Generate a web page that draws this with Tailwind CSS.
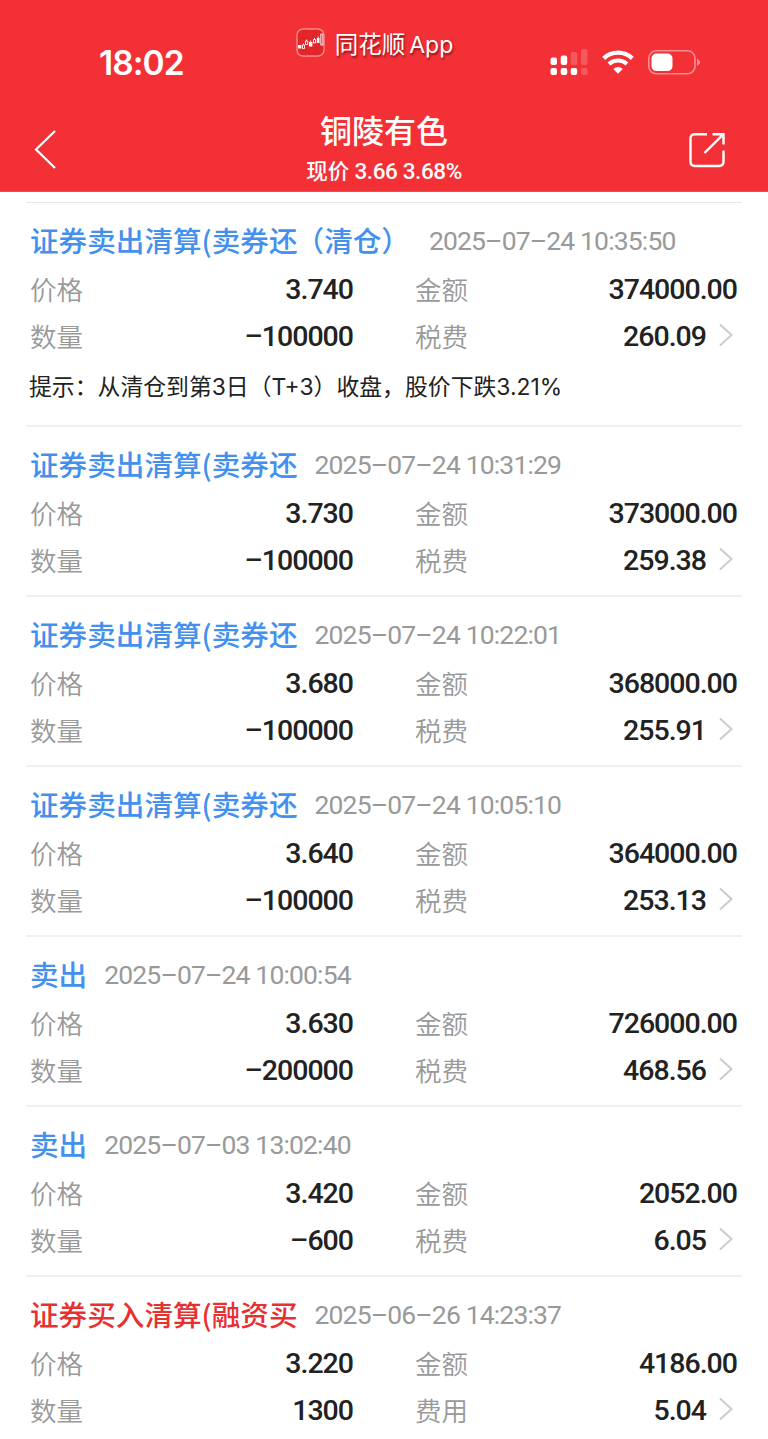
<!DOCTYPE html>
<html lang="zh-CN">
<head>
    <meta charset="UTF-8">
    <meta name="viewport" content="width=device-width, initial-scale=1.0">
    <title>铜陵有色</title>
    <script src="https://cdn.jsdelivr.net/npm/@tailwindcss/browser@4"></script>
</head>
<body class="bg-white font-['Roboto','Noto_Sans_CJK_SC',sans-serif] w-[768px] h-[1439px] overflow-hidden">
    <header class="bg-[#f23036] text-white h-[192px] border-b border-[#d9555a]">
        <!-- Status bar -->
        <div class="grid grid-cols-3 h-[96px]">
            <div class="pl-[99px] pt-[43px] text-[33.500px] leading-[40px] font-semibold font-['Inter',sans-serif] tracking-[-0.900px]">18:02</div>
            <div class="flex items-start justify-center gap-[9px] pt-[28px] pr-[19px] whitespace-nowrap">
                <svg class="w-[30px] h-[30px] shrink-0" viewBox="0 0 30 30" fill="none">
                    <rect x="1" y="1" width="27" height="27" rx="6" fill="#e3262a" stroke="#f98b8d" stroke-width="1.4"/>
                    <path d="M1 10H28M1 20H28M10 1V28M20 1V28" stroke="#d62226" stroke-width=".5"/>
                    <path d="M2 17h3.400v3.500H2zM13 14h3.400v4.500h-3.400zM20.800 10h2.700v5h-2.700z" fill="#fff"/>
                    <path d="M6.500 17h2v3.500h-2zM9.500 13h2.200v3.500h-2.200zM17.500 11.500h2v3.500h-2zM24.800 6h2v11h-2zM10.600 11.500v1.500M7.500 15.500v1.500M14.700 12.500v1.500M18.500 10v1.500M22.200 8.500v1.500" stroke="#fff" stroke-width=".9"/>
                </svg>
                <div class="text-[23.500px] leading-[31px] [text-shadow:1px_2px_2px_rgba(90,0,0,0.6)] font-['Noto_Sans_CJK_SC',sans-serif]">同花顺<span class="font-['Inter'] text-[23px] ml-[4px]">App</span></div>
            </div>
            <div class="flex items-start justify-end pt-[48px] pr-[67px]">
                <svg class="w-[38px] h-[28px]" viewBox="0 0 38 28" fill="#fff">
                    <rect x="0.500" y="9.500" width="6.500" height="7.500" rx="2"/>
                    <rect x="10.700" y="7.500" width="6.500" height="9.500" rx="2"/>
                    <rect x="20.700" y="4" width="6.500" height="13" rx="2" opacity=".2"/>
                    <rect x="31" y="1" width="6.500" height="16" rx="2" opacity=".2"/>
                    <rect x="0.500" y="20" width="6.500" height="7" rx="2"/>
                    <rect x="10.700" y="20" width="6.500" height="7" rx="2"/>
                    <rect x="20.700" y="20" width="6.500" height="7" rx="2"/>
                    <rect x="31" y="20" width="6.500" height="7" rx="2" opacity=".2"/>
                </svg>
                <svg class="w-[32px] h-[24px] mt-[2px] ml-[14px]" viewBox="0 0 32 24" fill="none" stroke="#fff">
                    <path d="M1.700 8.300C9.800 .7 22.200 .7 30.300 8.300" stroke-width="4.400"/>
                    <path d="M7 14C12 9.200 20 9.200 25 14" stroke-width="4"/>
                    <path d="M16 23.800L11.300 19Q16 15 20.700 19Z" fill="#fff" stroke="none"/>
                </svg>
                <svg class="w-[54px] h-[26px] mt-[1px] ml-[13px]" viewBox="0 0 54 26" fill="none">
                    <rect x="1.800" y="1.800" width="46.200" height="23" rx="7.500" stroke="#f98f92" stroke-width="1.600"/>
                    <rect x="4.500" y="4.500" width="21" height="17.600" rx="5" fill="#fff"/>
                    <path d="M50 9.500Q53 11 53 13.300T50 17Z" fill="#f98f92"/>
                </svg>
            </div>
        </div>
        <!-- Title bar -->
        <div class="flex justify-between h-[95px]">
            <svg class="w-[24px] h-[40px] ml-[34px] mt-[33px]" viewBox="0 0 24 40" fill="none" stroke="#fff" stroke-width="2.200">
                <path d="M21 2L2 20.500L21 39"/>
            </svg>
            <div class="text-center font-medium pt-[13px] pl-[22px]">
                <h1 class="text-[32px] leading-[46px] font-medium">铜陵有色</h1>
                <p class="text-[21.500px] leading-[32px]">现价 <span class="text-[22.500px] tracking-[-0.400px]">3.66 3.68%</span></p>
            </div>
            <svg class="w-[38px] h-[38px] mr-[42px] mt-[35px]" viewBox="0 0 38 38" fill="none" stroke="#fff" stroke-width="2.400">
                <path d="M19 3.200H7Q2.500 3.200 2.500 7.700V30.500Q2.500 35 7 35H31Q35.500 35 35.500 30.500V19.500"/>
                <path d="M24.500 3.200H35.500V13.500M35 3.700L16.500 22"/>
            </svg>
        </div>
    </header>

    <main id="records" class="pt-[10px] px-[26px]"></main>

    <script>
        const records = [
            { title: '证券卖出清算(卖券还<span class="-ml-[2px] mr-[2px]">（清仓）</span>', time: '2025–07–24 10:35:50', price: '3.740', count: '–100000', amount: '374000.00', fee: '260.09', hint: '提示：从清仓到第3日（T+3）收盘，股价下跌3.21%' },
            { title: '证券卖出清算(卖券还', time: '2025–07–24 10:31:29', price: '3.730', count: '–100000', amount: '373000.00', fee: '259.38' },
            { title: '证券卖出清算(卖券还', time: '2025–07–24 10:22:01', price: '3.680', count: '–100000', amount: '368000.00', fee: '255.91' },
            { title: '证券卖出清算(卖券还', time: '2025–07–24 10:05:10', price: '3.640', count: '–100000', amount: '364000.00', fee: '253.13' },
            { title: '卖出', time: '2025–07–24 10:00:54', price: '3.630', count: '–200000', amount: '726000.00', fee: '468.56' },
            { title: '卖出', time: '2025–07–03 13:02:40', price: '3.420', count: '–600', amount: '2052.00', fee: '6.05' },
            { title: '证券买入清算(融资买', time: '2025–06–26 14:23:37', price: '3.220', count: '1300', amount: '4186.00', fee: '5.04', buy: true },
        ];

        const label = (text) => `<span class="pt-[1px] text-[26.500px] font-[350] text-[#999] font-['Noto_Sans_CJK_SC',sans-serif]">${text}</span>`;
        const value = (text) => `<span class="pt-[2px] text-[28.500px] font-medium text-[#222] tracking-[-1px]">${text}</span>`;

        document.getElementById('records').innerHTML = records.map((r) => `
            <section class="border-t-2 first:border-t border-[#f0f0f0] first:border-[#e8e8e8] pt-[13px] pb-[13px] pl-[4px] pr-[5px]">
                <div class="flex items-center h-[48px] gap-[17px] whitespace-nowrap">
                    <h2 class="text-[28.600px] leading-[48px] font-medium font-['Noto_Sans_CJK_SC',sans-serif] ${r.buy ? 'text-[#e93030]' : 'text-[#4390ee]'}">${r.title}</h2>
                    <time class="pt-[1px] text-[26.500px] leading-[48px] text-[#999] tracking-[-0.850px]">${r.time}</time>
                </div>
                <div class="grid grid-cols-[323px_322px] gap-x-[62px] leading-[47px]">
                    <div class="flex justify-between h-[47px]">${label('价格')}${value(r.price)}</div>
                    <div class="flex justify-between h-[47px]">${label('金额')}${value(r.amount)}</div>
                    <div class="flex justify-between h-[47px]">${label('数量')}${value(r.count)}</div>
                    <div class="flex justify-between h-[47px]">
                        ${label(r.buy ? '费用' : '税费')}
                        <div class="flex">
                            ${value(r.fee)}
                            <svg class="w-[16px] h-[24px] ml-[12px] mr-[3px] mt-[12px]" viewBox="0 0 16 24" fill="none" stroke="#ccc" stroke-width="2"><path d="M2 1.500L13.500 12L2 22.500"/></svg>
                        </div>
                    </div>
                </div>
                ${r.hint ? `<p class="h-[54px] pt-[2px] ml-[-1px] leading-[54px] text-[22.850px] text-[#222] whitespace-nowrap font-['Inter','Noto_Sans_CJK_SC',sans-serif]">${r.hint}</p>` : ''}
            </section>`).join('');
    </script>
</body>
</html>
